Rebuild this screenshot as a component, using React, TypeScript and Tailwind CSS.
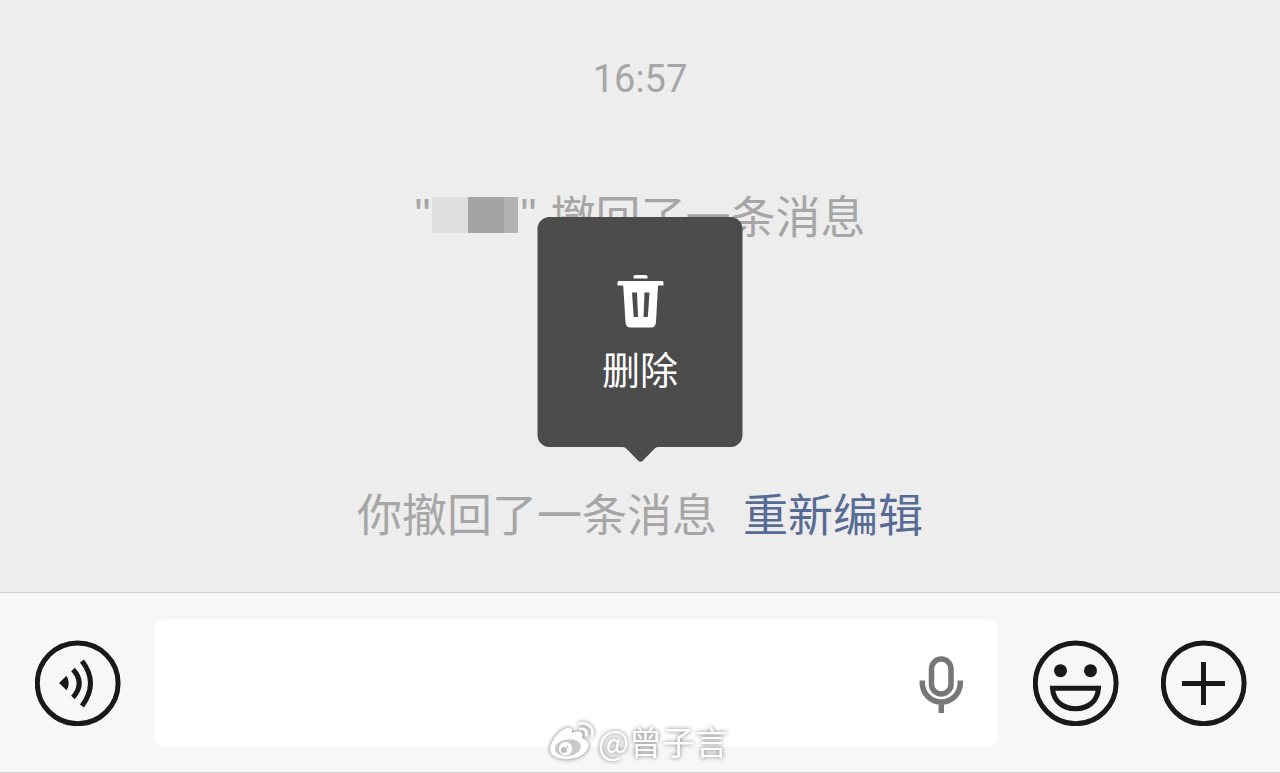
import type { ReactNode } from "react";

function RoundButton({ label, children }: { label: string; children: ReactNode }) {
  return (
    <button type="button" aria-label={label} className="size-[86px] shrink-0 text-[#191919]">
      <svg viewBox="0 0 86 86" className="size-full" fill="none" stroke="currentColor" strokeWidth="5">
        <circle cx="42.700" cy="43.300" r="40.4" />
        {children}
      </svg>
    </button>
  );
}

function DeletePopover() {
  return (
    <div className="absolute bottom-full left-1/2 mb-9 -translate-x-1/2">
      <button
        type="button"
        className="flex h-[230px] w-[205px] flex-col items-center rounded-xl bg-[#4c4c4c] pt-14 text-white"
      >
        <svg viewBox="0 0 48 56" className="h-14 w-12" fill="currentColor" aria-hidden="true">
          <path d="M17 5.500V3.500Q17 2 19 2H29Q31 2 31 3.500V5.500Z" />
          <path
            fillRule="evenodd"
            d="M2.500 8H45.500Q47 8 47 9.500V12.500H41.500L39.500 49Q39.200 54.500 34.500 54.500H14Q9.300 54.500 9 49L6.700 12.500H1V9.500Q1 8 2.500 8ZM15.500 19.500L17.200 44H21.500L20.500 19.500ZM28 19.500L27 44H31.300L33 19.500Z"
          />
        </svg>
        <span className="mt-3.5 text-[38px] leading-[50px]">删除</span>
      </button>
      <svg
        viewBox="0 0 36 16"
        className="absolute top-full left-1/2 h-4 w-9 -translate-x-1/2"
        fill="#4c4c4c"
        aria-hidden="true"
      >
        <path d="M0 0H36C34 0 33 .7 31.500 2.200L20.500 13.500Q18 16.200 15.500 13.500L4.500 2.200C3 .7 2 0 0 0Z" />
      </svg>
    </div>
  );
}

function Watermark() {
  return (
    <div className="pointer-events-none absolute bottom-2 left-1/2 flex -translate-x-1/2 items-center gap-0.5 pr-1 text-white drop-shadow-[0_0_2px_rgba(0,0,0,0.55)]">
      <svg viewBox="0 0 144 126" className="h-[42px] w-12" fill="currentColor" aria-hidden="true">
        <path d="M7 88C7 62 38 26 60 23C71 22 75 29 71 39C86 33 107 31 103 48C102 53 103 54 107 56C118 60 124 68 122 79C118 102 86 118 56 118C28 118 7 107 7 88Z" />
        <ellipse cx="60" cy="83" rx="39" ry="25" fill="#c9c9c9" transform="rotate(-8 60 83)" />
        <circle cx="53" cy="86" r="20" />
        <circle cx="48" cy="90" r="9" fill="#bdbdbd" />
        <circle cx="59" cy="81" r="3" fill="#bdbdbd" />
        <path
          d="M94 11C121 5 140 26 132 49M97 27C110 24 119 34 115 45"
          fill="none"
          stroke="currentColor"
          strokeWidth="8"
          strokeLinecap="round"
        />
      </svg>
      <span className="text-[33px] leading-[46px] whitespace-nowrap">@曾子言</span>
    </div>
  );
}

export default function App() {
  return (
    <div
      lang="zh-CN"
      className="flex min-h-screen flex-col bg-[#ededed] font-['Noto_Sans_CJK_SC',sans-serif] text-[#a6a6a6]"
    >
      <main className="flex flex-1 flex-col items-center pt-[49px] pb-[49px]">
        <time className="font-[Roboto,sans-serif] text-[38px] leading-[60px]">16:57</time>

        <p className="mt-[76px] flex items-center text-[45px] leading-[60px]">
          <span className="font-['Liberation_Sans',sans-serif]">"</span>
          <span className="ml-0.5 flex" aria-hidden="true">
            <span className="h-9 w-9 bg-[#e0e0e0]" />
            <span className="h-9 w-9 bg-[#a4a4a4]" />
            <span className="h-9 w-3.5 bg-[#b2b2b2]" />
          </span>
          <span className="ml-0.5 font-['Liberation_Sans',sans-serif]">"</span>
          <span className="ml-3.5">撤回了一条消息</span>
        </p>

        <div className="relative mt-auto flex gap-[26px] text-[45px] leading-[60px]">
          <p>你撤回了一条消息</p>
          <a href="#edit" className="text-[#576b95]">
            重新编辑
          </a>
          <DeletePopover />
        </div>
      </main>

      <footer className="relative flex items-center border-y border-[#d0d0d0] bg-[#f7f7f7] pt-[26px] pr-[33px] pb-[25px] pl-[35px]">
        <RoundButton label="语音">
          <path d="M24 43L31.500 35.700Q36 43 31.500 50.300Z" fill="currentColor" stroke="none" />
          <path d="M38 29.500Q50.500 43 38 57.500M47 21Q64 43 47 66" />
        </RoundButton>

        <div className="relative ml-[33px] flex-1">
          <input
            type="text"
            aria-label="消息"
            className="block h-32 w-full rounded-xl bg-white pr-24 pl-6 text-[45px] text-[#191919] outline-none"
          />
          <button
            type="button"
            aria-label="语音输入"
            className="absolute inset-y-0 right-[34px] flex items-center text-[#777777]"
          >
            <svg viewBox="0 0 46 60" className="h-[60px] w-[46px]" fill="none" stroke="currentColor" strokeWidth="5.500">
              <rect x="13.500" y="6" width="19.500" height="35" rx="9.750" />
              <path d="M4.300 27.500V30A19 19 0 0 0 42.300 30V27.500M23.300 49V60" />
            </svg>
          </button>
        </div>

        <div className="ml-[35px] flex gap-[42px]">
          <RoundButton label="表情">
            <circle cx="27.500" cy="30.700" r="6.500" fill="currentColor" stroke="none" />
            <circle cx="57.500" cy="30.700" r="6.500" fill="currentColor" stroke="none" />
            <path d="M19.500 48.200H65.500C64.500 61 55.500 68.700 42.500 68.700S20.500 61 19.500 48.200Z" />
          </RoundButton>
          <RoundButton label="更多">
            <path d="M42.500 22V65M21 43.500H64" />
          </RoundButton>
        </div>

        <Watermark />
      </footer>
    </div>
  );
}
